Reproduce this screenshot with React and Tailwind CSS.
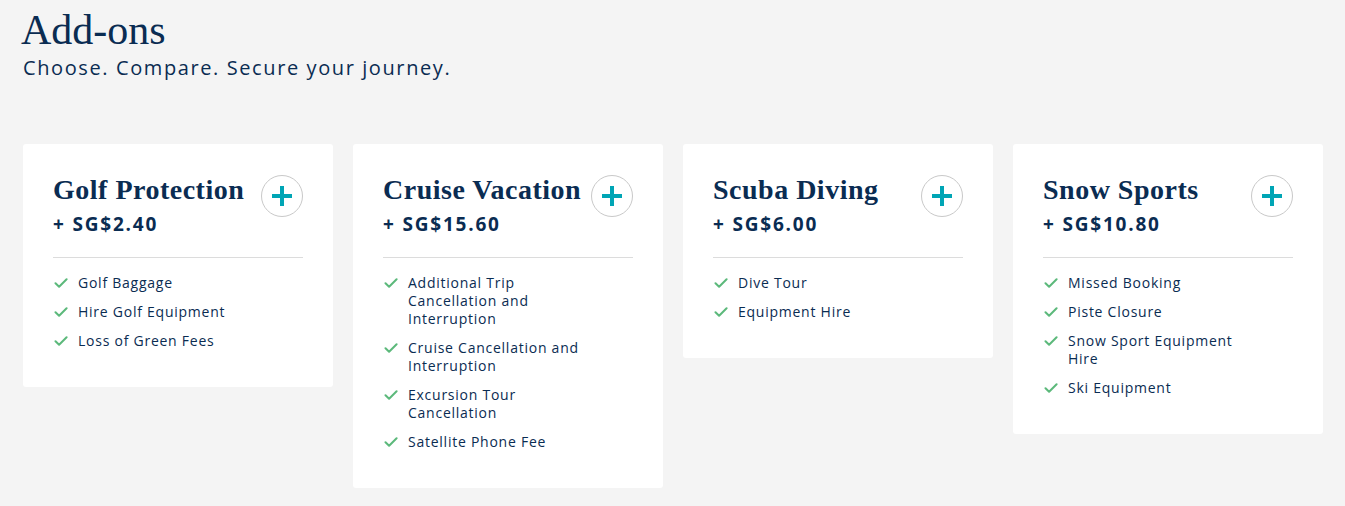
import React from "react";

const addons = [
  {
    name: "Golf Protection",
    price: "+ SG$2.40",
    items: ["Golf Baggage", "Hire Golf Equipment", "Loss of Green Fees"],
  },
  {
    name: "Cruise Vacation",
    price: "+ SG$15.60",
    items: [
      "Additional Trip Cancellation and Interruption",
      "Cruise Cancellation and Interruption",
      "Excursion Tour Cancellation",
      "Satellite Phone Fee",
    ],
  },
  {
    name: "Scuba Diving",
    price: "+ SG$6.00",
    items: ["Dive Tour", "Equipment Hire"],
  },
  {
    name: "Snow Sports",
    price: "+ SG$10.80",
    items: [
      "Missed Booking",
      "Piste Closure",
      "Snow Sport Equipment Hire",
      "Ski Equipment",
    ],
  },
];

function Check() {
  return (
    <svg width="14" height="12" viewBox="0 0 14 12" fill="none" className="mt-[3px] shrink-0">
      <path d="M1.5 6.2l3.6 3.6L12.6 2.2" stroke="#5cb97b" strokeWidth="2" strokeLinecap="round" strokeLinejoin="round" />
    </svg>
  );
}

function AddonCard({ addon }) {
  return (
    <div className="w-[310px] shrink-0 rounded-[3px] bg-white px-[30px] pt-[30px] pb-[37px]">
      <div className="flex items-start justify-between">
        <div>
          <h3 className="font-['Liberation_Serif',serif] text-[28px] font-bold leading-[32px] tracking-[0.5px] text-[#0a2c52]">
            {addon.name}
          </h3>
          <div className="mt-[7px] text-[19px] font-bold leading-[22px] tracking-[1.8px] text-[#0a2c52]">
            {addon.price}
          </div>
        </div>
        <button className="mt-[1px] flex h-[42px] w-[42px] shrink-0 items-center justify-center rounded-full border border-[#c9c9c9] bg-white">
          <svg width="20" height="20" viewBox="0 0 20 20">
            <path d="M10 0v20M0 10h20" stroke="#00a5b5" strokeWidth="4" />
          </svg>
        </button>
      </div>
      <div className="mt-[22px] border-t border-[#dcdcdc]" />
      <ul className="mt-[16px] flex flex-col gap-[11px]">
        {addon.items.map((item) => (
          <li key={item} className="flex items-start gap-[10px] pl-[1px]">
            <Check />
            <span className="w-[172px] text-[14px] leading-[18px] tracking-[0.75px] text-[#0a2c52]">
              {item}
            </span>
          </li>
        ))}
      </ul>
    </div>
  );
}

export default function App() {
  return (
    <div className="min-h-screen bg-[#f4f4f4] px-[23px] pt-[6px] font-['Open_Sans',sans-serif]">
      <h1 className="-ml-[2px] font-['Liberation_Serif',serif] text-[42px] leading-[48px] text-[#0a2c52]">
        Add-ons
      </h1>
      <p className="mt-[1px] text-[20px] leading-[26px] tracking-[1.6px] text-[#0a2c52]">
        Choose. Compare. Secure your journey.
      </p>
      <div className="mt-[63px] flex items-start gap-[20px]">
        {addons.map((a) => (
          <AddonCard key={a.name} addon={a} />
        ))}
      </div>
    </div>
  );
}
